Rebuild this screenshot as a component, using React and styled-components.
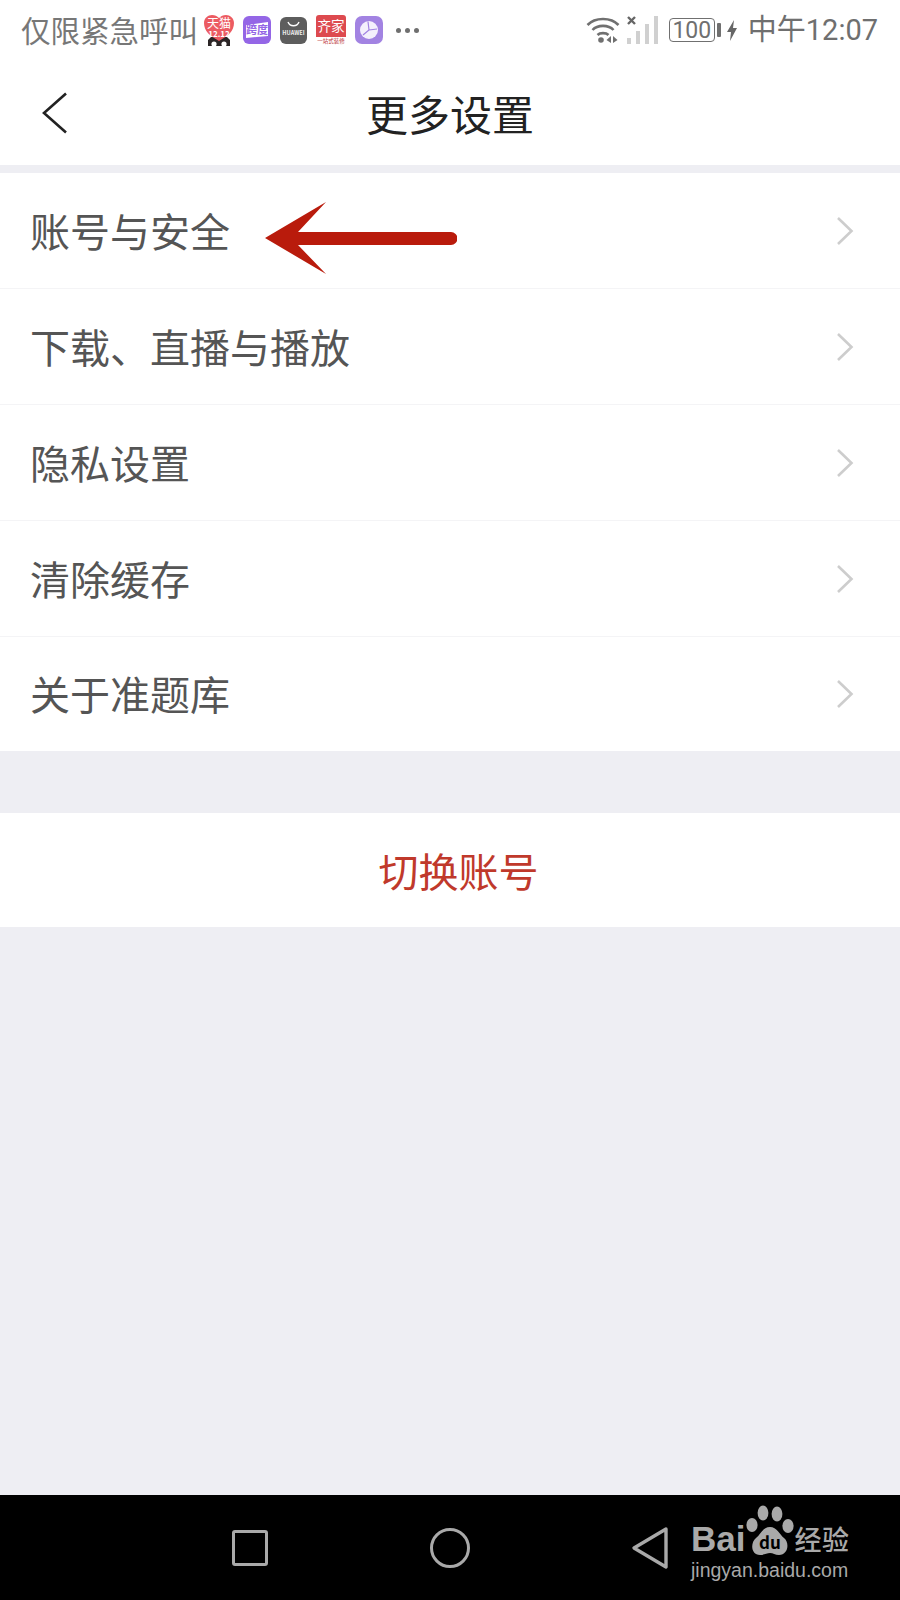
import { createGlobalStyle, styled } from "styled-components";

const CJK = `"Noto Sans CJK SC", "Noto Sans", sans-serif`;

const items = ["账号与安全", "下载、直播与播放", "隐私设置", "清除缓存", "关于准题库"];

export default function App() {
  return (
    <Page>
      <GlobalStyle />
      <StatusBar>
        <StatusLeft>
          <StatusText>仅限紧急呼叫</StatusText>
          <TmallIcon />
          <KuaduIcon />
          <HuaweiIcon />
          <QijiaIcon />
          <ClockIcon />
          <Dots>
            <i />
            <i />
            <i />
          </Dots>
        </StatusLeft>
        <StatusRight>
          <WifiIcon />
          <SignalIcon />
          <Battery>
            <BatteryBody>100</BatteryBody>
            <BatteryCap />
          </Battery>
          <BoltIcon />
          <Time>中午12:07</Time>
        </StatusRight>
      </StatusBar>
      <Header>
        <BackButton>
          <svg width="28" height="44" viewBox="0 0 28 44">
            <path d="M25 2.5 L3 22 L25 41.5" fill="none" stroke="#222" strokeWidth="2.6" />
          </svg>
        </BackButton>
        <Title>更多设置</Title>
      </Header>
      <Menu>
        {items.map((item, index) => (
          <MenuRow key={index}>
            <RowLabel>{item}</RowLabel>
            <Chevron />
            {index === 0 && <RedArrow />}
          </MenuRow>
        ))}
      </Menu>
      <SwitchRow>切换账号</SwitchRow>
      <Filler />
      <NavBar>
        <NavSquare />
        <NavCircle />
        <svg width="38" height="44" viewBox="0 0 38 44">
          <path
            d="M35 3 L3 22 L35 41 Z"
            fill="none"
            stroke="#a9a9a9"
            strokeWidth="3.4"
            strokeLinejoin="round"
          />
        </svg>
        <Logo>
          <LogoTop>
            <LogoWord>Bai</LogoWord>
            <PawIcon />
            <LogoCn>经验</LogoCn>
          </LogoTop>
          <LogoUrl>jingyan.baidu.com</LogoUrl>
        </Logo>
      </NavBar>
    </Page>
  );
}

function TmallIcon() {
  return (
    <svg width="30" height="31" viewBox="0 0 30 31">
      <path d="M4 31 V25 L7 22 H23 L26 25 V31 Z" fill="#2b2526" />
      <circle cx="10" cy="29" r="2.6" fill="#fff" />
      <circle cx="20" cy="29" r="2.6" fill="#fff" />
      <path
        d="M15 26 C6 21 0 16 0 8 C0 3 4 0 8 0 C11 0 13 1 15 3 C17 1 19 0 22 0 C26 0 30 3 30 8 C30 16 24 21 15 26 Z"
        fill="#ec5b62"
      />
      <IconText x="15" y="13" fontSize="12" fill="#fff" textAnchor="middle">
        天猫
      </IconText>
      <IconText x="15" y="22" fontSize="8" fill="#fff" textAnchor="middle" fontWeight="700">
        12.12
      </IconText>
    </svg>
  );
}

function KuaduIcon() {
  return (
    <svg width="28" height="28" viewBox="0 0 28 28">
      <rect width="28" height="28" rx="6" fill="#9466e6" />
      <path d="M3 9 L25 6 V20 L3 22 Z" fill="#fff" />
      <IconText x="14" y="18" fontSize="11" fill="#9466e6" textAnchor="middle" fontWeight="700">
        跨度
      </IconText>
    </svg>
  );
}

function HuaweiIcon() {
  return (
    <svg width="27" height="27" viewBox="0 0 27 27">
      <rect width="27" height="27" rx="6" fill="#5d5d5d" />
      <path d="M8 5 C10 10 17 10 19 5" fill="none" stroke="#fff" strokeWidth="1.4" />
      <IconText x="13.5" y="18" fontSize="5.6" fill="#eee" textAnchor="middle" fontWeight="700">
        HUAWEI
      </IconText>
    </svg>
  );
}

function QijiaIcon() {
  return (
    <svg width="30" height="30" viewBox="0 0 30 30">
      <path d="M3 0 H27 Q30 0 30 3 V22 H0 V3 Q0 0 3 0 Z" fill="#dd4a4f" />
      <rect y="22" width="30" height="8" fill="#fff" />
      <IconText x="15" y="16" fontSize="13.5" fill="#fff" textAnchor="middle">
        齐家
      </IconText>
      <IconText x="15" y="28" fontSize="5.5" fill="#b33" textAnchor="middle">
        一站式装修
      </IconText>
    </svg>
  );
}

function ClockIcon() {
  return (
    <svg width="28" height="28" viewBox="0 0 28 28">
      <rect width="28" height="28" rx="7" fill="#a283e2" />
      <circle cx="14" cy="14" r="9" fill="#f4f0fc" />
      <path d="M13 5.5 L14 14 L8 19 M14 14 L22 13" fill="none" stroke="#a283e2" strokeWidth="1.2" />
    </svg>
  );
}

function WifiIcon() {
  return (
    <svg width="34" height="28" viewBox="0 0 34 28">
      <g fill="none" stroke="#707070" strokeWidth="2.6">
        <path d="M1.5 9 C9 1 25 1 32.5 9" />
        <path d="M6.5 14 C11.5 8.5 22.5 8.5 27.5 14" />
        <path d="M11.5 19 C14 16.5 20 16.5 22.5 19" />
      </g>
      <circle cx="15" cy="24" r="2.8" fill="#707070" />
      <path d="M25 20 V27 L20.5 24 Z M27 20 V27 L31.5 24 Z" fill="#707070" />
    </svg>
  );
}

function SignalIcon() {
  return (
    <SignalBox width="31" height="28" viewBox="0 0 31 28">
      <path d="M1 1 L8 8 M8 1 L1 8" stroke="#666" strokeWidth="2.4" />
      <rect x="0" y="22" width="4" height="6" fill="#d0d0d0" />
      <rect x="9" y="15" width="4" height="13" fill="#d0d0d0" />
      <rect x="18" y="8" width="4" height="20" fill="#d0d0d0" />
      <rect x="27" y="0" width="4" height="28" fill="#d0d0d0" />
    </SignalBox>
  );
}

function BoltIcon() {
  return (
    <BoltBox width="10" height="21" viewBox="0 0 10 21">
      <path d="M7 0 L0 12 H4 L3 21 L10 8 H6 Z" fill="#666" />
    </BoltBox>
  );
}

function Chevron() {
  return (
    <svg width="18" height="30" viewBox="0 0 18 30">
      <path d="M2 2 L15.5 15 L2 28" fill="none" stroke="#cdcdcd" strokeWidth="2.6" />
    </svg>
  );
}

function RedArrow() {
  return (
    <ArrowOverlay width="192" height="72" viewBox="0 0 192 72">
      <path
        d="M0 36 L61 0 L33 30 H186 A6.5 6.5 0 0 1 186 43 H33 L61 72 Z"
        fill="#b91b0c"
      />
    </ArrowOverlay>
  );
}

function PawIcon() {
  return (
    <PawBox width="48" height="50" viewBox="0 0 48 50">
      <ellipse cx="6" cy="20" rx="5.6" ry="7" fill="#a9a9a9" />
      <ellipse cx="17" cy="8" rx="5.4" ry="7.6" fill="#a9a9a9" />
      <ellipse cx="31" cy="9" rx="5.4" ry="7.6" fill="#a9a9a9" />
      <ellipse cx="42" cy="21" rx="5.6" ry="7" fill="#a9a9a9" />
      <path
        d="M24 22 C31 22 33 29 38 33 C44 38 42 50 33 50 C29 50 27 48 24 48 C21 48 18 50 14 50 C5 50 4 38 10 33 C15 29 17 22 24 22 Z"
        fill="#a9a9a9"
      />
      <IconText x="24" y="44" fontSize="17" fill="#000" textAnchor="middle" fontWeight="700">
        du
      </IconText>
    </PawBox>
  );
}

const GlobalStyle = createGlobalStyle`
  html,
  body {
    margin: 0;
    padding: 0;
    background: #eeeef3;
  }
  * {
    box-sizing: border-box;
  }
`;
const Page = styled.div`
  width: 900px;
  height: 1600px;
  display: flex;
  flex-direction: column;
  font-family: ${CJK};
  background: #eeeef3;
`;
const StatusBar = styled.div`
  height: 60px;
  padding: 0 22px 0 21px;
  display: flex;
  align-items: center;
  justify-content: space-between;
  background: #ffffff;
`;
const StatusLeft = styled.div`
  display: flex;
  align-items: center;
  gap: 9px;
`;
const StatusRight = styled.div`
  display: flex;
  align-items: center;
`;
const StatusText = styled.div`
  font-size: 29.5px;
  line-height: 40px;
  color: #777777;
  width: 177px;
  margin: -3px -3px 0 0;
  white-space: nowrap;
`;
const IconText = styled.text`
  font-family: ${CJK};
`;
const Dots = styled.div`
  display: flex;
  gap: 4px;
  margin-left: 4px;
  i {
    width: 5px;
    height: 5px;
    border-radius: 50%;
    background: #6f6f6f;
  }
`;
const SignalBox = styled.svg`
  margin-left: 7px;
`;
const BoltBox = styled.svg`
  margin-left: 6px;
`;
const Battery = styled.div`
  display: flex;
  align-items: center;
  margin-left: 11px;
`;
const BatteryBody = styled.div`
  width: 46px;
  height: 24px;
  border: 1.5px solid #707070;
  border-radius: 4px;
  display: flex;
  align-items: center;
  justify-content: center;
  font-family: Roboto, sans-serif;
  font-size: 23px;
  color: #707070;
`;
const BatteryCap = styled.div`
  width: 4px;
  height: 14px;
  margin-left: 2px;
  background: #707070;
  border-radius: 1px;
`;
const Time = styled.div`
  font-family: Roboto, ${CJK};
  font-size: 29px;
  line-height: 40px;
  color: #6f6f6f;
  margin: -1px 0 0 11px;
  white-space: nowrap;
`;
const Header = styled.div`
  position: relative;
  height: 105px;
  display: flex;
  align-items: center;
  justify-content: center;
  background: #ffffff;
`;
const BackButton = styled.div`
  position: absolute;
  left: 41px;
  top: 31px;
  display: flex;
`;
const Title = styled.div`
  font-size: 42px;
  line-height: 60px;
  color: #222222;
`;
const Menu = styled.div`
  margin-top: 8px;
  background: #ffffff;
`;
const MenuRow = styled.div`
  position: relative;
  height: 116px;
  padding: 0 46px 0 30px;
  display: flex;
  align-items: center;
  justify-content: space-between;
  border-bottom: 1px solid #f4f4f6;
  &:last-child {
    height: 114px;
    border-bottom: none;
  }
`;
const RowLabel = styled.div`
  font-size: 40px;
  line-height: 56px;
  color: #555555;
  margin-top: -2px;
`;
const ArrowOverlay = styled.svg`
  position: absolute;
  left: 265px;
  top: 29px;
`;
const SwitchRow = styled.div`
  margin-top: 62px;
  height: 114px;
  padding-left: 17px;
  display: flex;
  align-items: center;
  justify-content: center;
  background: #ffffff;
  font-size: 40px;
  color: #c0392b;
`;
const Filler = styled.div`
  flex: 1;
`;
const NavBar = styled.div`
  height: 105px;
  padding: 0 0 0 232px;
  display: flex;
  align-items: center;
  background: #000000;
`;
const NavSquare = styled.div`
  width: 36px;
  height: 36px;
  border: 3.5px solid #a9a9a9;
  border-radius: 3px;
  margin-right: 162px;
`;
const NavCircle = styled.div`
  width: 40px;
  height: 40px;
  border: 3.5px solid #a9a9a9;
  border-radius: 50%;
  margin-right: 161px;
`;
const Logo = styled.div`
  margin: -9px 0 0 22px;
  display: flex;
  flex-direction: column;
  width: 162px;
`;
const LogoTop = styled.div`
  display: flex;
  align-items: flex-end;
  height: 50px;
`;
const LogoWord = styled.div`
  font-family: "Liberation Sans", sans-serif;
  font-size: 35px;
  line-height: 28px;
  font-weight: 700;
  color: #a9a9a9;
  margin: 0 1px 2px 0;
`;
const PawBox = styled.svg`
  flex: none;
`;
const LogoCn = styled.div`
  font-size: 27px;
  line-height: 28px;
  letter-spacing: 0.5px;
  font-weight: 500;
  color: #a9a9a9;
  white-space: nowrap;
  margin-bottom: 2px;
`;
const LogoUrl = styled.div`
  font-family: "Liberation Sans", sans-serif;
  font-size: 19.5px;
  line-height: 22px;
  color: #a9a9a9;
  margin-top: 4px;
  white-space: nowrap;
`;
